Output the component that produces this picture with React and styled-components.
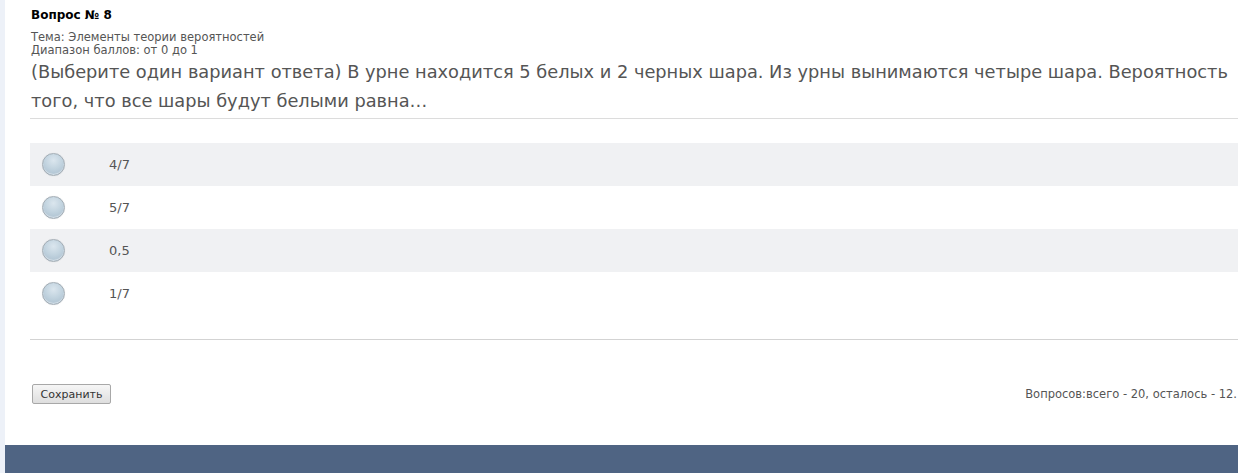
import React from "react";
import styled, { createGlobalStyle } from "styled-components";

const Global = createGlobalStyle`
  html, body { margin: 0; padding: 0; background: #edf1f8; }
  body { font-family: "DejaVu Sans", Verdana, sans-serif; overflow: hidden; }
`;

const Page = styled.div`
  margin-left: 5px;
  width: 1233px;
  height: 473px;
  display: flex;
  flex-direction: column;
  background: #fff;
`;

const Main = styled.div`
  flex: 1;
  padding: 8px 0 0 25px;
  display: flex;
  flex-direction: column;
`;

const Title = styled.div`
  font-weight: bold;
  font-size: 12px;
  color: #000;
  padding-left: 1px;
  line-height: 14px;
`;

const Meta = styled.div`
  margin-top: 9px;
  font-size: 11.5px;
  line-height: 13px;
  color: #555;
  padding-left: 1px;
`;

const Question = styled.div`
  font-size: 17.8px;
  line-height: 29px;
  color: #555;
  padding-left: 1px;
  padding-bottom: 3px;
  border-bottom: 1px solid #dcdcdc;
`;

const Options = styled.div`
  margin-top: 24px;
  display: flex;
  flex-direction: column;
`;

const Row = styled.label`
  height: 43px;
  display: flex;
  align-items: center;
  background: ${(p) => (p.$shade ? "#f0f1f3" : "#fff")};
  font-size: 13px;
  color: #555;
`;

const Radio = styled.span`
  width: 23px;
  height: 23px;
  box-sizing: border-box;
  border-radius: 50%;
  margin-left: 12px;
  border: 1px solid #a3adb5;
  background: radial-gradient(circle at 50% 30%, #dbe6ee 0%, #c0d2de 50%, #a6bacb 100%);
  box-shadow: inset 0 -1px 1px rgba(255,255,255,0.5), 0 0 1px rgba(0,0,0,0.12);
`;

const OptText = styled.span`
  margin-left: 44px;
`;

const Divider = styled.div`
  margin-top: 24px;
  border-top: 1px solid #d3d3d3;
`;

const Bottom = styled.div`
  margin-top: 44px;
  display: flex;
  align-items: center;
  justify-content: space-between;
  padding-left: 2px;
`;

const Button = styled.button`
  font-family: "DejaVu Sans", Verdana, sans-serif;
  font-size: 11px;
  color: #333;
  height: 20px;
  width: 79px;
  padding: 0;
  border: 1px solid #a8a8a8;
  border-radius: 2px;
  background: linear-gradient(#f6f6f6, #dedede);
`;

const Stats = styled.div`
  font-size: 11.5px;
  color: #555;
  margin-right: 1px;
  white-space: nowrap;
`;

const Footer = styled.div`
  height: 28px;
  background: #4f6483;
`;

const opts = ["4/7", "5/7", "0,5", "1/7"];

export default function App() {
  return (
    <>
      <Global />
      <Page>
        <Main>
          <Title>Вопрос № 8</Title>
          <Meta>
            Тема: Элементы теории вероятностей
            <br />
            Диапазон баллов: от 0 до 1
          </Meta>
          <Question>
            (Выберите один вариант ответа) В урне находится 5 белых и 2 черных шара. Из урны вынимаются четыре шара. Вероятность того, что все шары будут белыми равна…
          </Question>
          <Options>
            {opts.map((o, i) => (
              <Row key={o} $shade={i % 2 === 0}>
                <Radio />
                <OptText>{o}</OptText>
              </Row>
            ))}
          </Options>
          <Divider />
          <Bottom>
            <Button>Сохранить</Button>
            <Stats>Вопросов:всего - 20, осталось - 12.</Stats>
          </Bottom>
        </Main>
        <Footer />
      </Page>
    </>
  );
}
